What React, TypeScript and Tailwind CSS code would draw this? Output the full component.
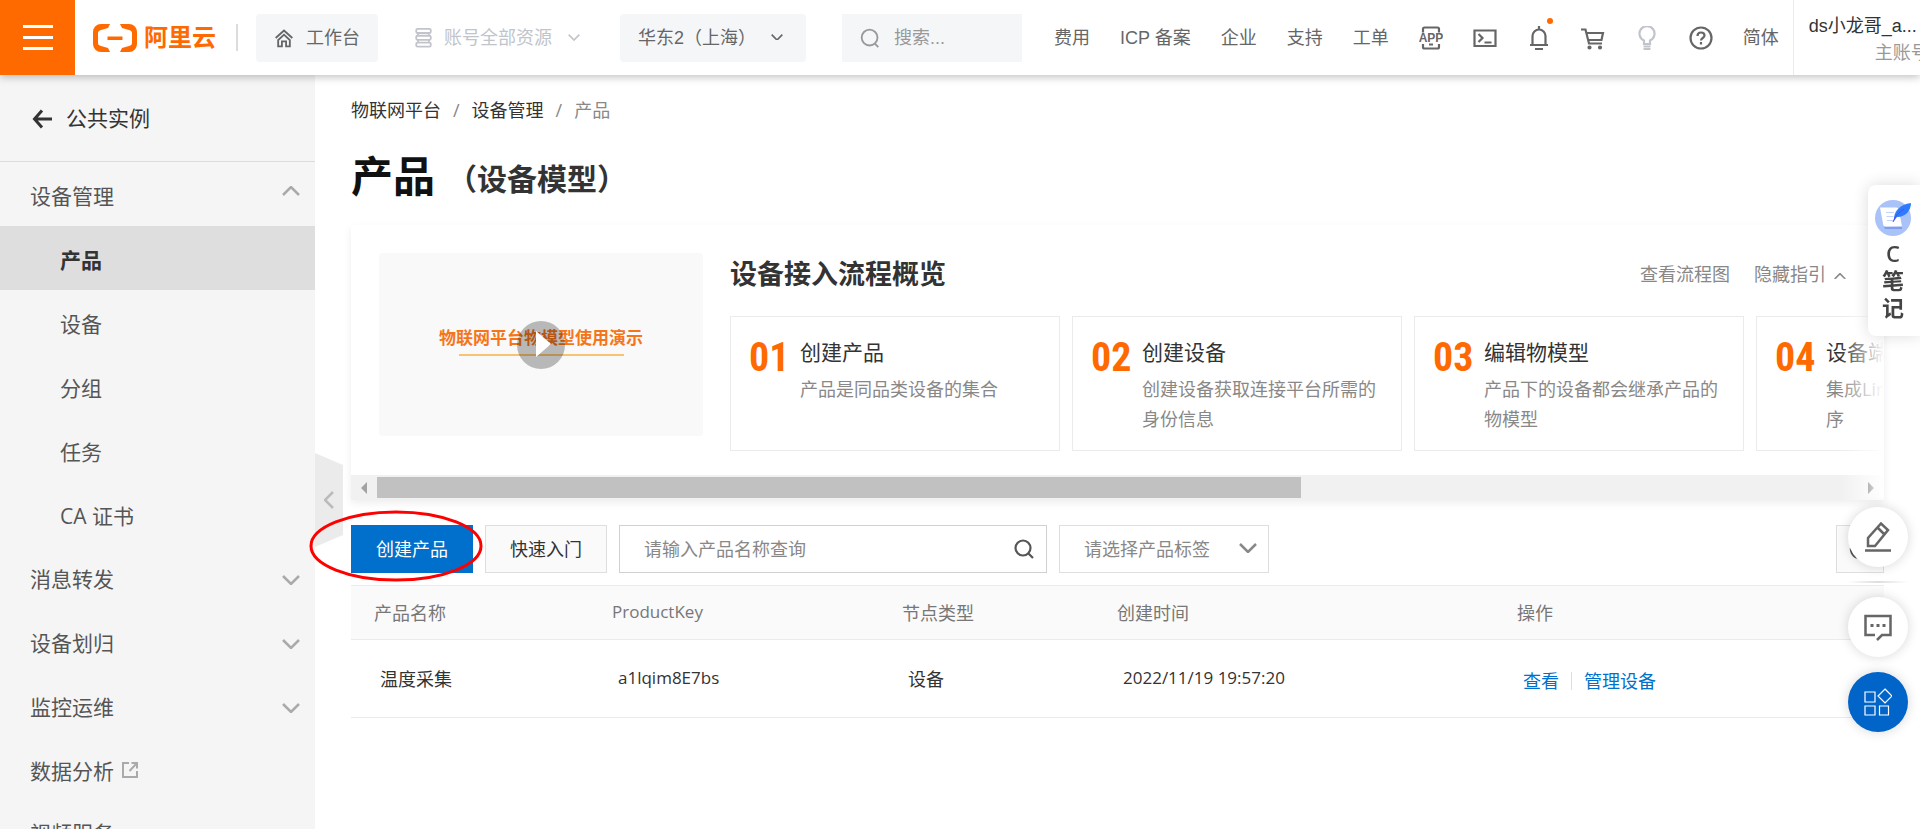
import { useState, type ReactNode } from "react";
import clsx from "clsx";

const steps = [
    { no: "01", title: "创建产品", lines: ["产品是同品类设备的集合"] },
    { no: "02", title: "创建设备", lines: ["创建设备获取连接平台所需的", "身份信息"] },
    { no: "03", title: "编辑物模型", lines: ["产品下的设备都会继承产品的", "物模型"] },
    { no: "04", title: "设备端开发", lines: ["集成Link SDK开发应用程", "序"] },
];

const deviceMenu = ["产品", "设备", "分组", "任务", "CA 证书"];
const otherMenu = ["消息转发", "设备划归", "监控运维"];

const products = [{ name: "温度采集", key: "a1lqim8E7bs", type: "设备", time: "2022/11/19 19:57:20" }];

function Chevron({ dir = "down", className }: { dir?: "up" | "down" | "left"; className?: string }) {
    const d = { down: "M1 1l8 8 8-8", up: "M1 9l8-8 8 8", left: "M9 1L1 9l8 8" }[dir];
    return (
        <svg viewBox={dir === "left" ? "0 0 10 18" : "0 0 18 10"} fill="none" stroke="currentColor" strokeWidth="2.500" className={className}>
            <path d={d} />
        </svg>
    );
}

function Icon({ children, className = "size-6" }: { children: ReactNode; className?: string }) {
    return (
        <svg viewBox="0 0 24 24" fill="none" stroke="currentColor" strokeWidth="2.200" className={clsx("shrink-0", className)}>
            {children}
        </svg>
    );
}

function Header() {
    return (
        <header className="relative z-20 flex h-[75px] shrink-0 items-center overflow-visible whitespace-nowrap bg-white font-['Liberation_Sans','Noto_Sans_CJK_SC',sans-serif] text-lg text-[#666] shadow-[0_2px_8px_rgba(0,0,0,0.25)]">
            <button aria-label="菜单" className="flex h-[75px] w-[75px] shrink-0 flex-col items-center justify-center gap-2 bg-[#ff6a00]">
                <span className="h-[3px] w-[30px] bg-white"></span>
                <span className="h-[3px] w-[30px] bg-white"></span>
                <span className="h-[3px] w-[30px] bg-white"></span>
            </button>
            <a href="#" className="ml-[18px] flex shrink-0 items-center gap-[7px] text-2xl font-bold text-[#ff6a00]">
                <svg viewBox="0 0 44 28" className="h-7 w-11" fill="currentColor">
                    <path d="M17 0H8a8 8 0 0 0-8 8v12a8 8 0 0 0 8 8h9l-2-4-7-2c-2-.5-3-1.500-3-3V9c0-1.500 1-2.500 3-3l7-2z" />
                    <path d="M27 0h9a8 8 0 0 1 8 8v12a8 8 0 0 1-8 8h-9l2-4 7-2c2-.5 3-1.500 3-3V9c0-1.500-1-2.500-3-3l-7-2z" />
                    <path d="M14.500 12.500h15v3.500h-15z" />
                </svg>
                阿里云
            </a>
            <span className="ml-5 h-[27px] w-0.5 shrink-0 bg-[#dcdcdc]"></span>
            <button className="ml-[18px] flex h-12 w-[122px] shrink-0 items-center justify-center gap-3 rounded bg-[#f5f6f8]">
                <Icon className="size-5">
                    <path d="M2 12L12 3l10 9M4.500 15L12 8l7.500 7M5 14v8h4.500v-6h5v6H19v-8" />
                </Icon>
                工作台
            </button>
            <button className="ml-[37px] flex shrink-0 items-center gap-3 text-[#c1c5cb]">
                <svg viewBox="0 0 18 22" className="h-5 w-[17px]" fill="none" stroke="currentColor" strokeWidth="2">
                    <rect x="1" y="1" width="16" height="4.500" rx="1.500" />
                    <rect x="1" y="8.500" width="16" height="4.500" rx="1.500" />
                    <rect x="1" y="16" width="16" height="4.500" rx="1.500" />
                    <path d="M3 5.500v3M15 5.500v3M3 13v3M15 13v3" />
                </svg>
                账号全部资源
                <Chevron className="ml-1 w-3" />
            </button>
            <div className="relative ml-10 h-12 w-[186px] shrink-0">
                <select aria-label="地域" className="h-12 w-full appearance-none rounded bg-[#f5f6f8] px-[18px]">
                    <option>华东2（上海）</option>
                </select>
                <Chevron className="pointer-events-none absolute right-[23px] top-5 w-3" />
            </div>
            <label className="ml-9 flex h-12 w-[180px] shrink-0 items-center gap-3.5 bg-[#f5f6f8] px-[18px] text-[#999]">
                <Icon className="size-5">
                    <circle cx="11.500" cy="11.500" r="9.500" />
                    <path d="M17.500 18.500L22 23" />
                </Icon>
                <input aria-label="搜索" placeholder="搜索..." className="w-full min-w-0 bg-transparent outline-none placeholder:text-[#999]" />
            </label>
            <nav className="ml-8 flex shrink-0 items-center gap-[30px]">
                <a href="#">费用</a>
                <a href="#">ICP 备案</a>
                <a href="#">企业</a>
                <a href="#">支持</a>
                <a href="#">工单</a>
                <a href="#" aria-label="APP">
                    <Icon>
                        <path d="M4 6.500V3c0-1 .5-1.500 1.500-1.500h13C19.500 1.500 20 2 20 3v3.500M4 18v3c0 1 .5 1.500 1.500 1.500h13c1 0 1.500-.5 1.500-1.500v-3M10 18.500h4" />
                        <text x="12" y="16" textAnchor="middle" fontSize="12" fontWeight="700" fill="currentColor" stroke="none">APP</text>
                    </Icon>
                </a>
                <a href="#" aria-label="命令行">
                    <Icon>
                        <path d="M1.500 4.500h21v15.500h-21zM5.500 8l4 4-4 4M11.500 16.500h7" />
                    </Icon>
                </a>
                <a href="#" aria-label="消息" className="relative">
                    <Icon>
                        <path d="M12 0v3M3 19h18M5.500 19v-9a6.500 6.500 0 0 1 13 0v9M8 23h8" />
                    </Icon>
                    <span className="absolute -right-0.5 -top-2 size-1.5 rounded-full bg-[#ff6a00]"></span>
                </a>
                <a href="#" aria-label="购物车">
                    <Icon>
                        <path d="M0 3.500h4.500L8 17.500h13M5.500 7H22l-1.500 7H7" />
                        <circle cx="8.500" cy="21.500" r="1" />
                        <circle cx="19" cy="21.500" r="1" />
                    </Icon>
                </a>
                <a href="#" aria-label="提示" className="text-[#c1c5cb]">
                    <Icon>
                        <path d="M9 18v-3.500a7.500 7.500 0 1 1 6 0V18zM8.500 20.500h7M8.500 23h7" />
                    </Icon>
                </a>
                <a href="#" aria-label="帮助">
                    <Icon>
                        <circle cx="12" cy="12" r="10.500" />
                        <path d="M8.500 10c0-2.500 1.500-3.500 3.500-3.500s3.500 1.200 3.500 3c0 2.500-3.500 2.500-3.500 5M12 16v2.500" />
                    </Icon>
                </a>
                <a href="#">简体</a>
            </nav>
            <div className="ml-3.5 h-full min-w-0 flex-1 overflow-hidden border-l border-[#ebebeb] pl-[15px] pt-3">
                <div className="flex w-[120px] flex-col">
                    <span className="leading-7 text-[#333]">ds小龙哥_a...</span>
                    <span className="self-end leading-[26px] text-[#999]">主账号</span>
                </div>
            </div>
        </header>
    );
}

function Sidebar() {
    const [active, setActive] = useState("产品");
    return (
        <aside className="w-[315px] shrink-0 bg-[#f5f5f5] text-[21px] text-[#555]">
            <a href="#" className="flex h-[87px] items-center gap-3.5 border-b border-[#dcdcdc] pl-8 pt-0.5 text-[#333]">
                <svg viewBox="0 0 20 20" className="size-5" fill="none" stroke="currentColor" strokeWidth="3">
                    <path d="M10 1.500L2.500 10l7.500 8.500M2.500 10H20" />
                </svg>
                公共实例
            </a>
            <button className="flex h-16 w-full items-center justify-between pl-[30px] pr-[15px] pt-1.5">
                设备管理
                <Chevron dir="up" className="mb-3 w-[18px] text-[#aaa]" />
            </button>
            {deviceMenu.map((item) => (
                <button
                    key={item}
                    onClick={() => setActive(item)}
                    className={clsx("flex h-16 w-full items-center pl-[60px] pt-1.5", item === active && "bg-[#dedede] font-bold text-[#333]")}
                >
                    {item}
                </button>
            ))}
            {otherMenu.map((item) => (
                <button key={item} className="flex h-16 w-full items-center justify-between pl-[30px] pr-[15px] pt-1">
                    {item}
                    <Chevron className="w-[18px] text-[#aaa]" />
                </button>
            ))}
            <a href="#" className="flex h-16 items-center gap-2 pl-[30px] pt-1">
                数据分析
                <svg viewBox="0 0 16 16" className="mb-1 size-4 text-[#aaa]" fill="none" stroke="currentColor" strokeWidth="2">
                    <path d="M7 1H1v14h14V9M9.500 1H15v5.500M15 1L7.500 9" />
                </svg>
            </a>
            <a href="#" className="flex h-16 items-center pl-[30px]">视频服务</a>
        </aside>
    );
}

function Guide() {
    return (
        <section className="relative mt-[25px] overflow-hidden bg-white">
            <div className="flex gap-[27px] pb-6 pl-7 pt-7">
                <button aria-label="播放" className="relative h-[183px] w-[324px] shrink-0 rounded-sm bg-[#f9f9f9] pb-2">
                    <span className="flex flex-col items-center gap-1 text-[17px] font-bold leading-6 text-[#f5761a]">
                        物联网平台物模型使用演示
                        <span className="h-0.5 w-[165px] bg-[#f8c471]"></span>
                    </span>
                    <svg viewBox="0 0 48 48" className="absolute left-[138px] top-[68px] size-12">
                        <circle cx="24" cy="24" r="24" fill="#000" fillOpacity="0.26" />
                        <path d="M19 10l15 13-15 13z" fill="#fff" />
                    </svg>
                </button>
                <div className="min-w-0 flex-1">
                    <div className="flex items-center gap-6 pr-[38px] pt-[3px] text-lg text-[#888]">
                        <h2 className="flex-1 text-[27px] font-bold leading-9 text-[#333]">设备接入流程概览</h2>
                        <a href="#">查看流程图</a>
                        <button className="flex items-center gap-2">
                            隐藏指引
                            <Chevron dir="up" className="mt-1 w-3" />
                        </button>
                    </div>
                    <ol className="mt-6 flex gap-3 overflow-hidden">
                        {steps.map((s) => (
                            <li key={s.no} className="flex h-[135px] w-[330px] shrink-0 border border-[#ebebeb] pl-[18px] pt-[19px]">
                                <span className="w-[51px] font-['Roboto_Condensed','Roboto',sans-serif] text-[40px] font-bold leading-[44px] text-[#ff6a00]">
                                    {s.no}
                                </span>
                                <div className="whitespace-nowrap">
                                    <h3 className="mb-1.5 text-[21px] leading-8 text-[#333]">{s.title}</h3>
                                    {s.lines.map((l) => (
                                        <p key={l} className="text-lg leading-[30px] text-[#888]">{l}</p>
                                    ))}
                                </div>
                            </li>
                        ))}
                    </ol>
                </div>
            </div>
            <div className="flex h-[25px] items-center gap-2.5 bg-[#f1f1f1] px-2.5 text-[#a3a3a3]">
                <svg viewBox="0 0 6 12" className="h-3 w-1.5" fill="currentColor"><path d="M6 0v12L0 6z" /></svg>
                <div className="flex-1">
                    <div className="h-[21px] w-[62.4%] bg-[#c1c1c1]"></div>
                </div>
                <svg viewBox="0 0 6 12" className="h-3 w-1.5 text-[#333]" fill="currentColor"><path d="M0 0v12l6-6z" /></svg>
            </div>
            <div className="pointer-events-none absolute inset-y-0 right-0 w-11 bg-linear-to-r from-white/0 to-white"></div>
        </section>
    );
}

function Toolbar() {
    return (
        <div className="mt-[25px] flex h-12 gap-3 text-lg">
            <div className="relative">
                <button className="h-12 w-[122px] bg-[#0070cc] text-white">创建产品</button>
                <svg viewBox="0 0 174 72" className="pointer-events-none absolute -left-[42px] -top-[15px] h-[72px] w-[174px] max-w-none">
                    <ellipse cx="87" cy="36" rx="85" ry="34" fill="none" stroke="#f00" strokeWidth="3" />
                </svg>
            </div>
            <button className="h-12 w-[122px] border border-[#dedede] bg-[#fafafa] text-[#333]">快速入门</button>
            <label className="flex w-[428px] items-center border border-[#d1d1d1] pl-6 pr-3">
                <input aria-label="产品名称" placeholder="请输入产品名称查询" className="min-w-0 flex-1 outline-none placeholder:text-[#888]" />
                <svg viewBox="0 0 20 20" className="size-5 text-[#555]" fill="none" stroke="currentColor" strokeWidth="2.200">
                    <circle cx="9" cy="9" r="7.500" />
                    <path d="M14.500 14.500L19 19" />
                </svg>
            </label>
            <div className="relative w-[210px]">
                <select aria-label="产品标签" className="h-12 w-full appearance-none border border-[#dedede] px-6 text-[#888]">
                    <option>请选择产品标签</option>
                </select>
                <Chevron className="pointer-events-none absolute right-3 top-[18px] w-[18px] text-[#888]" />
            </div>
            <button aria-label="刷新" className="ml-auto flex w-12 items-center justify-center border border-[#dedede] bg-[#fafafa] text-[#555]">
                <Icon>
                    <path d="M21 12a9 9 0 1 1-3-6.700" />
                </Icon>
            </button>
        </div>
    );
}

function ProductTable() {
    return (
        <table className="mt-3 w-full table-fixed text-left text-lg text-[#333]">
            <thead>
                <tr className="h-[54px] border-y border-[#ebebeb] bg-[#fafafa] text-[#777]">
                    <th className="w-[238px] pl-[23px] font-normal">产品名称</th>
                    <th className="w-[290px] pl-[23px] text-[17px] font-normal">ProductKey</th>
                    <th className="w-[215px] pl-[23px] font-normal">节点类型</th>
                    <th className="w-[400px] pl-[23px] font-normal">创建时间</th>
                    <th className="pl-[23px] font-normal">操作</th>
                </tr>
            </thead>
            <tbody>
                {products.map((p) => (
                    <tr key={p.key} className="h-[78px] border-b border-[#ebebeb]">
                        <td className="pl-[29px]">{p.name}</td>
                        <td className="pl-[29px] text-[17px]">{p.key}</td>
                        <td className="pl-[29px]">{p.type}</td>
                        <td className="pl-[29px] text-[17px]">{p.time}</td>
                        <td className="pl-[29px]">
                            <div className="flex items-center gap-3 pt-1 text-[#0070cc]">
                                <a href="#">查看</a>
                                <span className="h-[18px] w-px bg-[#dedede]"></span>
                                <a href="#">管理设备</a>
                            </div>
                        </td>
                    </tr>
                ))}
            </tbody>
        </table>
    );
}

function FloatingTools() {
    const round = "flex size-[60px] items-center justify-center rounded-full shadow-[0_0_12px_rgba(0,0,0,0.16)]";
    return (
        <>
            <button className="fixed right-0 top-[185px] z-10 flex h-[151px] w-[52px] flex-col items-center rounded-l-lg bg-white pr-0.5 pt-[15px] text-[22px] font-bold leading-[27px] text-[#444] shadow-[0_0_16px_rgba(0,0,0,0.14)]">
                <svg viewBox="0 0 36 36" className="size-9 shrink-0">
                    <circle cx="18" cy="18" r="18" fill="#a9c2f8" />
                    <path d="M9 27l1 2h17v-3" fill="#7f9df0" />
                    <path d="M5 7.500h16c2 0 3 1 3 3l3 16H11c-2 0-3-1-3-3z" fill="#fff" />
                    <path d="M11 12.500h8M11.500 16.500h7M12 20.500h6" stroke="#c3d3fa" strokeWidth="1.200" />
                    <path d="M19 21C18 12 25 4 36 3c0 7-5 14-14 14z" fill="#2f7bff" />
                    <path d="M18 22c2-6 6-10 11-13" fill="none" stroke="#5a46e8" />
                </svg>
                <span className="mt-1 font-semibold">C</span>
                <span>笔</span>
                <span>记</span>
            </button>
            <div className="fixed right-3 top-[507px] z-10 flex flex-col items-center text-[#666]">
                <button aria-label="编辑" className={clsx(round, "bg-white")}>
                    <svg viewBox="0 0 26 30" className="h-[30px] w-[26px]" fill="none" stroke="currentColor" strokeWidth="2.500">
                        <path d="M3 24v-8L16 1.500l7 6.500L10 24zM12.500 5.500l6.500 6.500M0 28.500h26" />
                    </svg>
                </button>
                <span className="my-3.5 h-0.5 w-[60px] bg-linear-to-r from-transparent via-[#ddd] to-transparent"></span>
                <button aria-label="反馈" className={clsx(round, "bg-white")}>
                    <svg viewBox="0 0 28 28" className="size-7" fill="none" stroke="currentColor" strokeWidth="2.500">
                        <path d="M11 22H1.500V3h25v19H18l-5 5" />
                        <path d="M6.500 12.500h3M12.500 12.500h3M18.500 12.500h3" strokeWidth="3" />
                    </svg>
                </button>
                <button aria-label="应用" className={clsx(round, "mt-[15px] bg-[#0064c8] text-white")}>
                    <svg viewBox="0 0 28 28" className="size-7" fill="none" stroke="currentColor" strokeWidth="1.200">
                        <path d="M1 4h10v10H1zM1 18h10v9H1zM15.500 18h9v9h-9zM21 1l7 7-7 7-7-7z" />
                    </svg>
                </button>
            </div>
        </>
    );
}

export default function App() {
    return (
        <div className="flex h-screen flex-col overflow-hidden bg-white font-['Open_Sans','Noto_Sans_CJK_SC',sans-serif]">
            <Header />
            <div className="flex min-h-0 flex-1 overflow-hidden">
                <Sidebar />
                <div className="relative">
                    <button aria-label="收起" className="absolute left-0 top-[378px] flex h-[94px] w-7 items-center justify-center bg-[#ebebeb] text-[#bbb] [clip-path:polygon(0_0,100%_12px,100%_82px,0_100%)]">
                        <Chevron dir="left" className="h-[18px]" />
                    </button>
                </div>
                <main className="min-w-0 flex-1 pl-9 pr-9 pt-[21px]">
                    <nav className="flex gap-3 text-lg leading-7 text-[#333]">
                        <a href="#">物联网平台</a>
                        <span className="text-[#888]">/</span>
                        <a href="#">设备管理</a>
                        <span className="text-[#888]">/</span>
                        <span className="text-[#888]">产品</span>
                    </nav>
                    <h1 className="mt-7 flex h-12 items-center gap-3 text-[42px] font-bold leading-[48px] text-[#111]">
                        产品
                        <span className="pt-1.5 text-[30px] leading-[44px] text-[#333]">（设备模型）</span>
                    </h1>
                    <div className="shadow-[0_3px_8px_rgba(0,0,0,0.07)]">
                        <Guide />
                    </div>
                    <Toolbar />
                    <ProductTable />
                </main>
            </div>
            <FloatingTools />
        </div>
    );
}
